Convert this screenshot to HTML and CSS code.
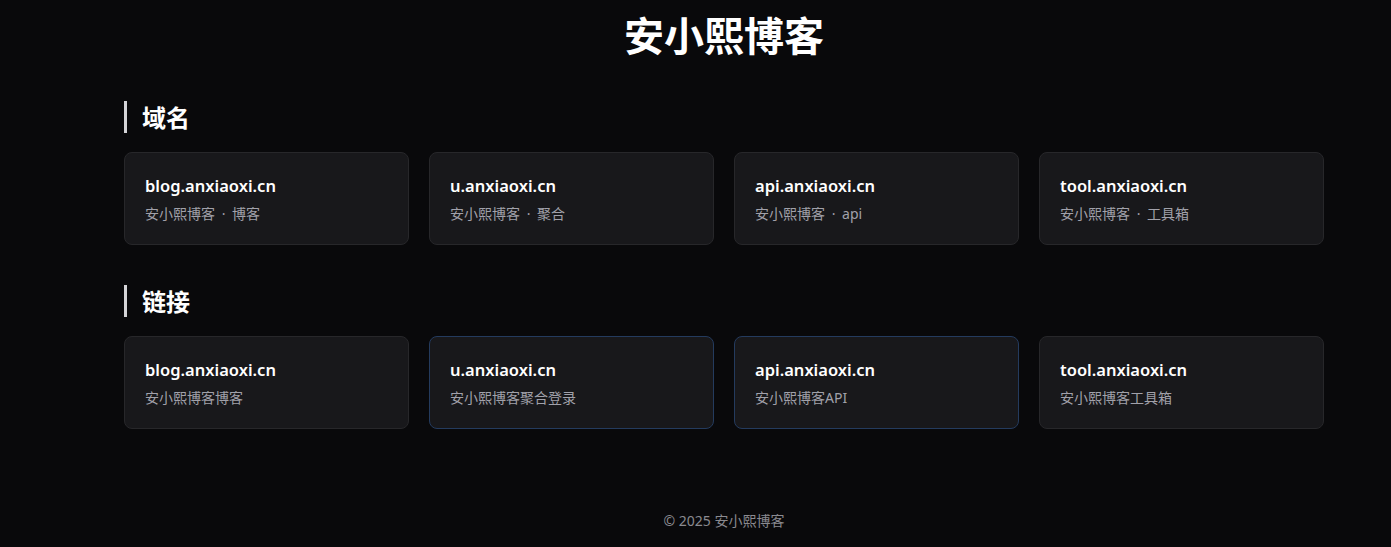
FILE: index.html
```html
<!DOCTYPE html>
<html lang="zh-CN">
<head>
<meta charset="utf-8">
<title>安小熙博客</title>
<link rel="stylesheet" href="styles.css">
</head>
<body>
<div class="wrap">
  <h1 class="site-title">安小熙博客</h1>

  <section class="section">
    <h2 class="section-title">域名</h2>
    <div class="grid">
      <div class="card"><div class="card-title">blog.anxiaoxi.cn</div><div class="card-desc">安小熙博客 · 博客</div></div>
      <div class="card"><div class="card-title">u.anxiaoxi.cn</div><div class="card-desc">安小熙博客 · 聚合</div></div>
      <div class="card"><div class="card-title">api.anxiaoxi.cn</div><div class="card-desc">安小熙博客 · api</div></div>
      <div class="card"><div class="card-title">tool.anxiaoxi.cn</div><div class="card-desc">安小熙博客 · 工具箱</div></div>
    </div>
  </section>

  <section class="section">
    <h2 class="section-title">链接</h2>
    <div class="grid">
      <div class="card"><div class="card-title">blog.anxiaoxi.cn</div><div class="card-desc">安小熙博客博客</div></div>
      <div class="card card-active"><div class="card-title">u.anxiaoxi.cn</div><div class="card-desc">安小熙博客聚合登录</div></div>
      <div class="card card-active"><div class="card-title">api.anxiaoxi.cn</div><div class="card-desc">安小熙博客API</div></div>
      <div class="card"><div class="card-title">tool.anxiaoxi.cn</div><div class="card-desc">安小熙博客工具箱</div></div>
    </div>
  </section>

  <footer class="footer">© 2025 安小熙博客</footer>
</div>
</body>
</html>
```

FILE: styles.css
```css
* { box-sizing: border-box; }
html, body { margin: 0; padding: 0; }
body {
  background: #09090b;
  color: #f4f4f5;
  font-family: "Noto Sans", "Noto Sans CJK SC", sans-serif;
  width: 1391px;
  height: 547px;
  overflow: hidden;
}
.wrap {
  width: 1200px;
  margin-left: 124px;
}
.site-title {
  margin: 0;
  padding-top: 7px;
  height: 70px;
  text-align: center;
  font-size: 40px;
  font-weight: 700;
  line-height: 54px;
  color: #ffffff;
  font-family: "Noto Sans CJK SC", sans-serif;
}
.section { margin-top: 31px; }
.section + .section { margin-top: 40px; }
.section-title {
  margin: 0 0 19px;
  border-left: 3px solid #d4d4d8;
  padding-left: 15px;
  height: 32px;
  font-size: 24px;
  font-weight: 700;
  line-height: 32px;
  color: #ffffff;
  font-family: "Noto Sans CJK SC", sans-serif;
}
.grid {
  display: grid;
  grid-template-columns: repeat(4, 1fr);
  gap: 20px;
}
.card {
  height: 93px;
  background: #18181b;
  border: 1px solid #27272a;
  border-radius: 8px;
  padding: 20px 20px;
}
.card-active { border-color: #243b5e; }
.card-title {
  font-size: 16.5px;
  font-weight: 600;
  line-height: 26px;
  color: #ffffff;
}
.card-desc {
  margin-top: 5px;
  font-size: 14px;
  line-height: 20px;
  color: #a1a1aa;
  word-spacing: 3px;
}
.footer {
  margin-top: 82px;
  text-align: center;
  font-size: 14px;
  line-height: 20px;
  color: #8a8a90;
}
```
